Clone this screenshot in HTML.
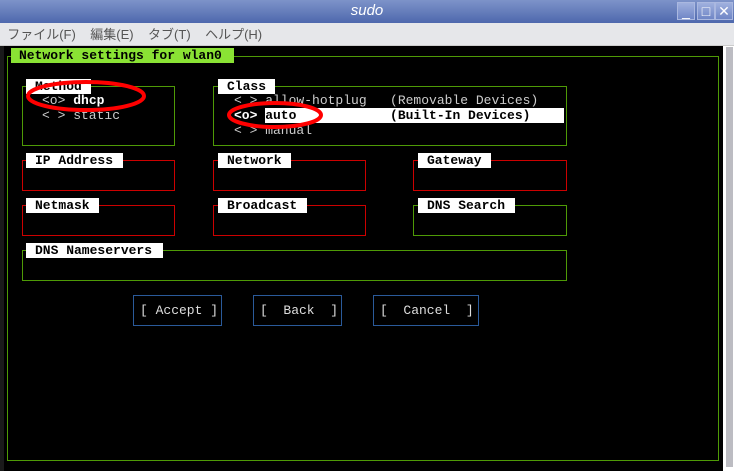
<!DOCTYPE html>
<html><head><meta charset="utf-8"><style>
*{margin:0;padding:0;box-sizing:border-box}
body{width:734px;height:471px;overflow:hidden;background:#000;position:relative;font-family:"Liberation Mono",monospace;font-size:13px}
.a{position:absolute}
#tb{left:0;top:0;width:734px;height:23px;background:linear-gradient(#7d93c9,#4e68ad);color:#fff;font:italic 15px "Liberation Sans",sans-serif;text-align:center;line-height:22px}
#mb{left:0;top:23px;width:734px;height:23px;background:#e6e7ea;color:#555;font:13px "Liberation Sans","Noto Sans CJK JP",sans-serif;line-height:23px;border-bottom:1px solid #ccc}
.wb{top:2px;width:18px;height:18px;border:1px solid #aab8e0;background:linear-gradient(#9fb0de,#6f86c6);color:#fff;font:14px "Liberation Sans";text-align:center;line-height:16px}
.bx{position:absolute;border:1px solid}
.g{border-color:#4e9a06}.r{border-color:#c00}
.lb{position:absolute;background:#fff;color:#000;font-weight:bold;height:15px;line-height:15px;padding-left:9px}
.t{position:absolute;color:#ccc;white-space:pre;line-height:15px}
.w{color:#fff;font-weight:bold}
.btn{position:absolute;border:1px solid #2a5a9a;color:#ddd;height:31px;line-height:29px;white-space:pre;padding-left:6px}
</style></head><body>
<div id="tb" class="a">sudo</div>
<div class="a wb" style="left:677px">_</div>
<div class="a wb" style="left:697px">□</div>
<div class="a wb" style="left:715px">✕</div>
<div id="mb" class="a">&nbsp;&nbsp;ファイル(F)&nbsp;&nbsp;&nbsp;&nbsp;編集(E)&nbsp;&nbsp;&nbsp;&nbsp;タブ(T)&nbsp;&nbsp;&nbsp;&nbsp;ヘルプ(H)</div>
<div class="a" style="left:723px;top:46px;width:11px;height:425px;background:#fff"></div>
<div class="a" style="left:726px;top:47px;width:7px;height:420px;background:#bcbcc2"></div>
<div class="a" style="left:0;top:46px;width:4px;height:425px;background:#1a1a1a"></div>

<div class="bx g" style="left:7px;top:56px;width:712px;height:405px"></div>
<div class="lb" style="left:11px;top:48px;width:223px;background:#8ae234;padding-left:8px">Network settings for wlan0</div>

<div class="bx g" style="left:22px;top:86px;width:153px;height:60px"></div>
<div class="lb" style="left:26px;top:79px;width:65px">Method</div>
<div class="t" style="left:42px;top:93px">&lt;o&gt; <span class="w">dhcp</span></div>
<div class="t" style="left:42px;top:108px">&lt; &gt; static</div>

<div class="bx g" style="left:213px;top:86px;width:354px;height:60px"></div>
<div class="lb" style="left:218px;top:79px;width:57px">Class</div>
<div class="t" style="left:234px;top:93px">&lt; &gt; allow-hotplug   (Removable Devices)</div>
<div class="a" style="left:265px;top:108px;width:299px;height:15px;background:#fff"></div>
<div class="t" style="left:234px;top:108px;color:#000;font-weight:bold"><span style="color:#fff">&lt;o&gt;</span> auto            (Built-In Devices)</div>
<div class="t" style="left:234px;top:123px">&lt; &gt; manual</div>

<div class="bx r" style="left:22px;top:160px;width:153px;height:31px"></div>
<div class="lb" style="left:26px;top:153px;width:97px">IP Address</div>
<div class="bx r" style="left:213px;top:160px;width:153px;height:31px"></div>
<div class="lb" style="left:218px;top:153px;width:73px">Network</div>
<div class="bx r" style="left:413px;top:160px;width:154px;height:31px"></div>
<div class="lb" style="left:418px;top:153px;width:73px">Gateway</div>

<div class="bx r" style="left:22px;top:205px;width:153px;height:31px"></div>
<div class="lb" style="left:26px;top:198px;width:73px">Netmask</div>
<div class="bx r" style="left:213px;top:205px;width:153px;height:31px"></div>
<div class="lb" style="left:218px;top:198px;width:89px">Broadcast</div>
<div class="bx g" style="left:413px;top:205px;width:154px;height:31px"></div>
<div class="lb" style="left:418px;top:198px;width:97px">DNS Search</div>

<div class="bx g" style="left:22px;top:250px;width:545px;height:31px"></div>
<div class="lb" style="left:26px;top:243px;width:137px">DNS Nameservers</div>

<div class="btn" style="left:133px;top:295px;width:89px">[ Accept ]</div>
<div class="btn" style="left:253px;top:295px;width:89px">[  Back  ]</div>
<div class="btn" style="left:373px;top:295px;width:106px">[  Cancel  ]</div>

<svg class="a" style="left:0;top:0" width="734" height="471">
<ellipse cx="86" cy="96" rx="58" ry="14" fill="none" stroke="#f00" stroke-width="4"/>
<ellipse cx="275" cy="115" rx="46" ry="12" fill="none" stroke="#f00" stroke-width="4"/>
</svg>
</body></html>
